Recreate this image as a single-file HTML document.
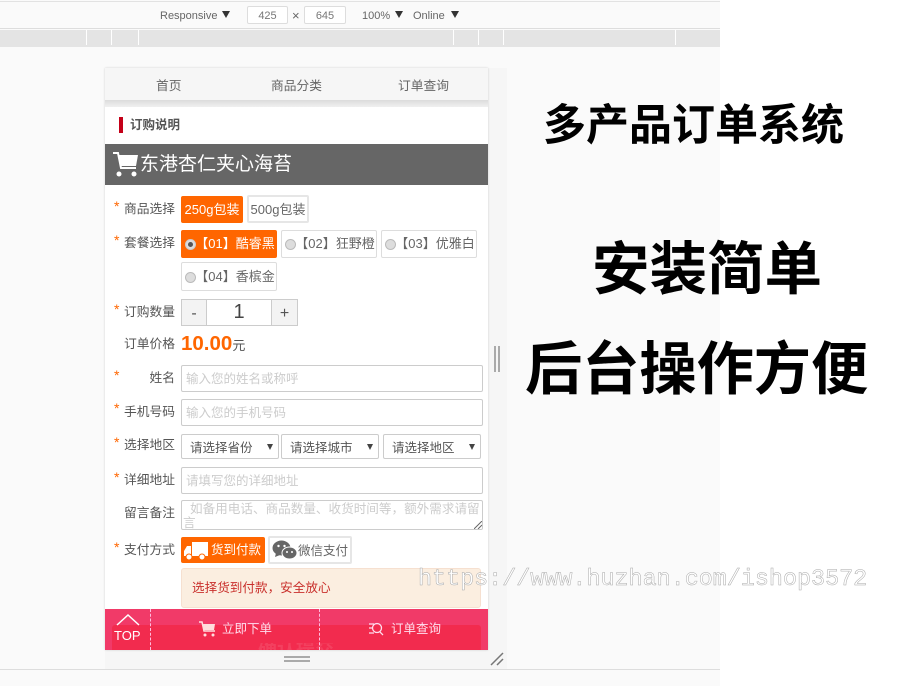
<!DOCTYPE html>
<html lang="zh"><head><meta charset="utf-8"><title>多产品订单系统</title>
<style>
*{box-sizing:border-box}
html,body{margin:0;padding:0;width:900px;height:686px;overflow:hidden;background:#fff}
body{position:relative;font-family:"Liberation Sans","Noto Sans CJK SC",sans-serif;color:#555;font-size:12px}
.a{position:absolute;white-space:nowrap}
.lb{position:absolute;left:105px;width:70px;font-size:12.750px;line-height:16px;color:#555;text-align:right;white-space:nowrap}
.st{position:absolute;left:114px;color:#f60;font-size:14px;line-height:16px}
.btn{position:absolute;border:1px solid #ddd;background:#fff;border-radius:2px;color:#666;font-size:13px;white-space:nowrap;text-align:center}
.on{background:#f60;border-color:#f60;color:#fff}
.rd{display:inline-block;width:11px;height:11px;border-radius:50%;background:#ddd;border:1px solid #bbb;position:absolute;left:3px;top:9px}
.in{position:absolute;left:181px;width:302px;height:27px;border:1px solid #ccc;border-radius:2px;background:#fff;color:#ccc;font-size:12.500px;line-height:26px;padding-left:4px;white-space:nowrap}
.sel{position:absolute;top:434px;height:25px;border:1px solid #ccc;border-radius:2px;background:#fff;color:#555;font-size:12.500px;line-height:26px;padding-left:8px;white-space:nowrap}
.sel i{position:absolute;right:5px;top:9px;border-left:3px solid transparent;border-right:3px solid transparent;border-top:6px solid #444}
.big{position:absolute;color:#000;font-weight:700;font-family:"Liberation Sans","Noto Sans CJK SC",sans-serif;white-space:nowrap}
</style></head><body>
<div class="a" style="left:0;top:0;width:720px;height:686px;background:#fafafa"></div>
<div class="a" style="left:0;top:1px;width:720px;height:1px;background:#e2e2e2"></div>
<div class="a" style="left:0;top:28px;width:720px;height:1px;background:#ddd"></div>
<div class="a" style="left:0;top:30px;width:720px;height:17px;background:#e4e4e4"></div>
<div class="a" style="left:86px;top:30px;width:1px;height:15px;background:#fff"></div>
<div class="a" style="left:111px;top:30px;width:1px;height:15px;background:#fff"></div>
<div class="a" style="left:138px;top:30px;width:1px;height:15px;background:#fff"></div>
<div class="a" style="left:453px;top:30px;width:1px;height:15px;background:#fff"></div>
<div class="a" style="left:478px;top:30px;width:1px;height:15px;background:#fff"></div>
<div class="a" style="left:503px;top:30px;width:1px;height:15px;background:#fff"></div>
<div class="a" style="left:675px;top:30px;width:1px;height:15px;background:#fff"></div>

<div class="a" style="left:160px;top:8px;font-size:11px;line-height:16px;color:#666">Responsive</div>
<div class="a" style="left:222px;top:11px;border-left:4px solid transparent;border-right:4px solid transparent;border-top:7px solid #333"></div>
<div class="a" style="left:247px;top:6px;width:41px;height:18px;border:1px solid #ddd;border-radius:2px;background:#fff;text-align:center;font-size:11px;line-height:18px;color:#777">425</div>
<div class="a" style="left:292px;top:8px;font-size:13px;line-height:16px;color:#666">×</div>
<div class="a" style="left:304px;top:6px;width:42px;height:18px;border:1px solid #ddd;border-radius:2px;background:#fff;text-align:center;font-size:11px;line-height:18px;color:#777">645</div>
<div class="a" style="left:362px;top:8px;font-size:11px;line-height:16px;color:#666">100%</div>
<div class="a" style="left:395px;top:11px;border-left:4px solid transparent;border-right:4px solid transparent;border-top:7px solid #333"></div>
<div class="a" style="left:413px;top:8px;font-size:11px;line-height:16px;color:#666">Online</div>
<div class="a" style="left:451px;top:11px;border-left:4px solid transparent;border-right:4px solid transparent;border-top:7px solid #333"></div>

<div class="a" style="left:488px;top:68px;width:19px;height:602px;background:#f6f6f6"></div>
<div class="a" style="left:105px;top:650px;width:402px;height:20px;background:#f6f6f6"></div>
<div class="a" style="left:0;top:669px;width:720px;height:1px;background:#ddd"></div>

<div class="a" style="left:105px;top:68px;width:383px;height:582px;background:#fff;box-shadow:0 0 2px rgba(0,0,0,.18)"></div>
<div class="a" style="left:105px;top:68px;width:383px;height:32px;background:#f6f6f6"></div>
<div class="a" style="left:105px;top:100px;width:383px;height:7px;background:linear-gradient(#dcdcdc,#f0f0f0)"></div>
<div class="a" style="left:156px;top:77px;font-size:12.750px;line-height:18px;color:#666">首页</div>
<div class="a" style="left:271px;top:77px;font-size:12.750px;line-height:18px;color:#666">商品分类</div>
<div class="a" style="left:398px;top:77px;font-size:12.750px;line-height:18px;color:#666">订单查询</div>

<div class="a" style="left:119px;top:117px;width:4px;height:16px;background:#c40018"></div>
<div class="a" style="left:130px;top:117px;font-size:12.500px;line-height:17px;font-weight:700;color:#555">订购说明</div>

<div class="a" style="left:105px;top:144px;width:383px;height:41px;background:#666"></div>
<svg class="a" style="left:112px;top:151px" width="28" height="27" viewBox="0 0 28 27"><path d="M1 2h5l3 15h15" fill="none" stroke="#fff" stroke-width="2"/><path d="M7 4h19l-2 11H9z" fill="#fff"/><circle cx="7" cy="23" r="2.500" fill="#fff"/><circle cx="22" cy="23" r="2.500" fill="#fff"/></svg>
<div class="a" style="left:140px;top:151px;font-size:19px;line-height:27px;color:#fff">东港杏仁夹心海苔</div>

<div class="st" style="top:198px">*</div><div class="lb" style="top:201px">商品选择</div>
<div class="btn on" style="left:181px;top:196px;width:62px;height:27px;line-height:25px">250g包装</div>
<div class="btn" style="left:247px;top:195px;width:62px;height:28px;line-height:26px;border-width:2px;border-color:#e6e6e6">500g包装</div>

<div class="st" style="top:232px">*</div><div class="lb" style="top:235px">套餐选择</div>
<div class="btn on" style="left:181px;top:230px;width:96px;height:28px;line-height:26px;padding-left:12px"><span class="rd" style="background:#ddd;border-color:#ccc;left:3px;top:8px"><span style="position:absolute;left:2px;top:2px;width:5px;height:5px;border-radius:50%;background:#555"></span></span>【01】酷睿黑</div>
<div class="btn" style="left:281px;top:230px;width:96px;height:28px;line-height:26px;padding-left:12px"><span class="rd" style="top:8px"></span>【02】狂野橙</div>
<div class="btn" style="left:381px;top:230px;width:96px;height:28px;line-height:26px;padding-left:12px"><span class="rd" style="top:8px"></span>【03】优雅白</div>
<div class="btn" style="left:181px;top:262px;width:96px;height:29px;line-height:27px;padding-left:12px"><span class="rd" style="top:9px"></span>【04】香槟金</div>

<div class="st" style="top:301px">*</div><div class="lb" style="top:304px">订购数量</div>
<div class="a" style="left:181px;top:299px;width:117px;height:27px;border:1px solid #ccc;background:#fff"></div>
<div class="a" style="left:182px;top:300px;width:25px;height:25px;background:#f3f3f3;border-right:1px solid #ccc;text-align:center;font-size:16px;line-height:27px;color:#555">-</div>
<div class="a" style="left:207px;top:300px;width:64px;height:25px;text-align:center;font-size:20px;line-height:25px;color:#444">1</div>
<div class="a" style="left:271px;top:300px;width:26px;height:25px;background:#f3f3f3;border-left:1px solid #ccc;text-align:center;font-size:16px;line-height:27px;color:#555">+</div>

<div class="lb" style="top:336px">订单价格</div>
<div class="a" style="left:181px;top:331px;font-size:20.500px;line-height:26px;font-weight:700;color:#f60">10.00<span style="font-size:13px;font-weight:400;color:#555">元</span></div>

<div class="st" style="top:367px">*</div><div class="lb" style="top:370px">姓名</div>
<div class="in" style="top:365px">输入您的姓名或称呼</div>
<div class="st" style="top:400px">*</div><div class="lb" style="top:404px">手机号码</div>
<div class="in" style="top:399px">输入您的手机号码</div>
<div class="st" style="top:434px">*</div><div class="lb" style="top:437px">选择地区</div>
<div class="sel" style="left:181px;width:98px">请选择省份<i></i></div>
<div class="sel" style="left:281px;width:98px">请选择城市<i></i></div>
<div class="sel" style="left:383px;width:98px">请选择地区<i></i></div>
<div class="st" style="top:469px">*</div><div class="lb" style="top:472px">详细地址</div>
<div class="in" style="top:467px">请填写您的详细地址</div>

<div class="lb" style="top:505px">留言备注</div>
<div class="a" style="left:181px;top:500px;width:302px;height:30px;border:1px solid #ccc;border-radius:2px;background:#fff;color:#ccc;font-size:12.600px;line-height:14px;padding:1px 0 0 1px;white-space:normal;overflow:hidden">&nbsp; 如备用电话、商品数量、收货时间等，额外需求请留言</div>
<svg class="a" style="left:474px;top:521px" width="8" height="8"><path d="M0 8L8 0M4 8L8 4" stroke="#666" stroke-width="1"/></svg>

<div class="st" style="top:539px">*</div><div class="lb" style="top:542px">支付方式</div>
<div class="btn on" style="left:181px;top:537px;width:84px;height:26px;line-height:24px;padding-left:29px;text-align:left;font-size:12.500px">货到付款</div>
<svg class="a" style="left:183px;top:541px" width="26" height="20" viewBox="0 0 26 20"><path d="M9 1h16v14H9z" fill="#fff"/><path d="M8 5H4L1 10v5h7z" fill="#fff"/><circle cx="6" cy="16" r="3" fill="#fff" stroke="#f60"/><circle cx="19" cy="16" r="3" fill="#fff" stroke="#f60"/></svg>
<div class="btn" style="left:268px;top:536px;width:84px;height:28px;line-height:26px;padding-left:28px;text-align:left;border-width:2px;border-color:#e6e6e6;font-size:12.500px">微信支付</div>
<svg class="a" style="left:272px;top:540px" width="26" height="20" viewBox="0 0 26 20"><ellipse cx="9.500" cy="8" rx="9" ry="7.500" fill="#666"/><path d="M4 13l-1 4 5-2z" fill="#666"/><ellipse cx="17.500" cy="13" rx="7.500" ry="6" fill="#666" stroke="#fff"/><circle cx="6.500" cy="6" r="1.200" fill="#fff"/><circle cx="12.500" cy="6" r="1.200" fill="#fff"/><circle cx="15" cy="12" r="1" fill="#fff"/><circle cx="20" cy="12" r="1" fill="#fff"/></svg>

<div class="a" style="left:181px;top:568px;width:300px;height:40px;background:#fbeee0;border:1px solid #f6e0d0;border-radius:3px"></div>
<div class="a" style="left:192px;top:580px;font-size:12.600px;line-height:17px;color:#c9302c">选择货到付款，安全放心</div>

<div class="a" style="left:105px;top:609px;width:383px;height:41px;background:#f13a68"></div>
<div class="a" style="left:112px;top:625px;width:369px;height:25px;background:#f22b4e;border-radius:3px 3px 0 0"></div>
<div class="a" style="left:258px;top:643px;font-size:19px;line-height:14px;height:7px;overflow:hidden;color:#f3405f;font-weight:700">确认提交</div>
<div class="a" style="left:150px;top:609px;height:41px;border-left:1px dashed #fbd"></div>
<div class="a" style="left:319px;top:609px;height:41px;border-left:1px dashed #fbd"></div>
<svg class="a" style="left:116px;top:613px" width="24" height="14"><path d="M1 12L12 2l11 10" fill="none" stroke="#fff" stroke-width="1.500"/></svg>
<div class="a" style="left:114px;top:628px;font-size:13px;line-height:16px;color:#fff">TOP</div>
<svg class="a" style="left:199px;top:621px" width="18" height="17" viewBox="0 0 18 17"><path d="M0 1h3l2 9h11" fill="none" stroke="#fdd" stroke-width="1.500"/><path d="M4 3h12l-1 6H5z" fill="#fdd"/><circle cx="6" cy="14" r="1.500" fill="#fdd"/><circle cx="14" cy="14" r="1.500" fill="#fdd"/></svg>
<div class="a" style="left:222px;top:621px;font-size:12.500px;line-height:17px;color:#fde">立即下单</div>
<svg class="a" style="left:368px;top:622px" width="16" height="14" viewBox="0 0 16 14"><path d="M1 2h5M1 6h3M1 11h5" stroke="#fde" stroke-width="1.300"/><circle cx="9" cy="6" r="4.500" fill="none" stroke="#fde" stroke-width="1.300"/><path d="M12 10l3 3" stroke="#fde" stroke-width="1.300"/></svg>
<div class="a" style="left:391px;top:621px;font-size:12.500px;line-height:17px;color:#fde">订单查询</div>

<div class="a" style="left:284px;top:656px;width:26px;height:2px;background:#aaa"></div>
<div class="a" style="left:284px;top:660px;width:26px;height:2px;background:#aaa"></div>
<svg class="a" style="left:490px;top:652px" width="14" height="14"><path d="M1 13L13 1M7 13l6-6" stroke="#777" stroke-width="1.500"/></svg>
<div class="a" style="left:494px;top:346px;width:2px;height:26px;background:#aaa"></div>
<div class="a" style="left:498px;top:346px;width:2px;height:26px;background:#aaa"></div>

<div class="big" style="left:543px;top:96px;font-size:43px;line-height:60px">多产品订单系统</div>
<div class="big" style="left:592px;top:234px;font-size:57.500px;line-height:72px">安装简单</div>
<div class="big" style="left:525px;top:334px;font-size:57.200px;line-height:72px">后台操作方便</div>

<div class="a" style="left:418px;top:566px;font-family:'Liberation Mono',monospace;font-size:23.400px;line-height:28px;color:#fff;-webkit-text-stroke:.5px #aaa">https://www.huzhan.com/ishop3572</div>
</body></html>
